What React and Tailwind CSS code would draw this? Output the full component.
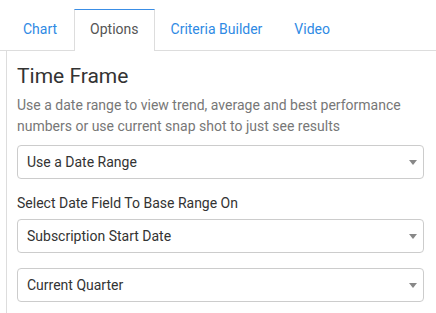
const tabs = ["Chart", "Options", "Criteria Builder", "Video"];

const Select = ({ value }) => (
  <div className="h-[34px] w-[407px] rounded-[4px] border border-[#cccccc] bg-white flex items-center justify-between pl-[9px] pr-[6px]">
    <span className="text-[14px] text-[#333333]">{value}</span>
    <svg width="8" height="5" viewBox="0 0 8 5">
      <polygon points="0,0 8,0 4,5" fill="#888888" />
    </svg>
  </div>
);

export default function App() {
  return (
    <div className="w-[436px] h-[313px] bg-white overflow-hidden font-['Roboto',sans-serif]">
      {/* Tabs */}
      <div className="flex pl-[6px] pt-[9px] border-b border-[#dddddd]">
        {tabs.map((t, i) => {
          const active = t === "Options";
          const pad = i === 0 ? "px-[16px]" : "px-[15px]";
          return (
            <div
              key={t}
              className={
                active
                  ? `h-[42px] -mb-px ${pad} pt-[9px] text-[14px] leading-[20px] text-[#555555] bg-white border-t border-t-[#3a8ee6] border-x border-x-[#dddddd]`
                  : `h-[42px] -mb-px ${pad} pt-[9px] text-[14px] leading-[20px] text-[#2f8ae4] border-t border-x border-transparent`
              }
            >
              {t}
            </div>
          );
        })}
      </div>

      {/* Panel */}
      <div className="ml-[6px] border-l border-[#dddddd] pl-[10px] pt-[11px] h-[262px]">
        <h2 className="text-[21px] leading-[28px] text-[#333333]">Time Frame</h2>
        <p className="mt-[5px] text-[14px] leading-[21px] text-[#777777] w-[410px]">
          Use a date range to view trend, average and best performance numbers or use current snap shot to just see results
        </p>
        <div className="mt-[8px]">
          <Select value="Use a Date Range" />
        </div>
        <div className="mt-[14px] text-[14px] leading-[20px] text-[#333333]">
          Select Date Field To Base Range On
        </div>
        <div className="mt-[6px]">
          <Select value="Subscription Start Date" />
        </div>
        <div className="mt-[15px]">
          <Select value="Current Quarter" />
        </div>
      </div>
    </div>
  );
}
